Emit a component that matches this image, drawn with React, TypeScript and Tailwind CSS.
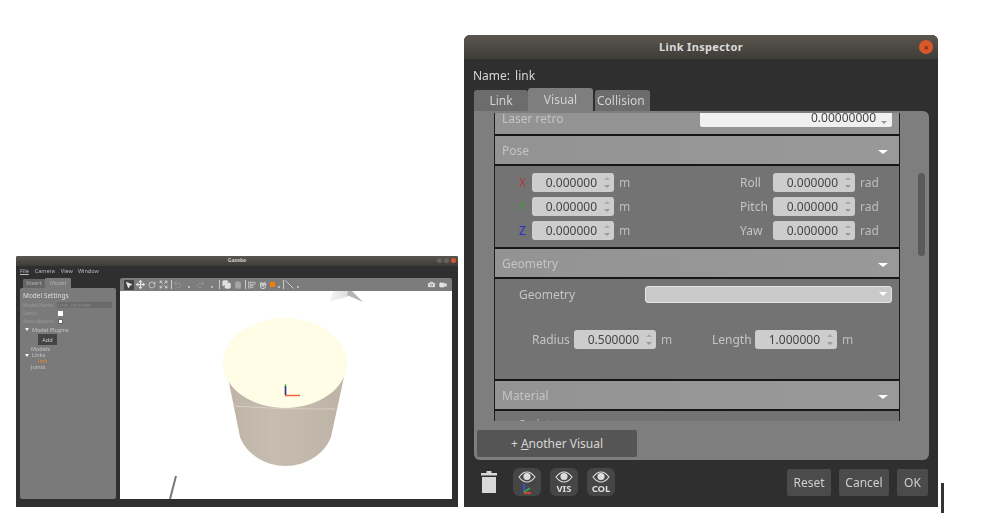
import React from "react";
import { MousePointer2, Move, RotateCw, Expand, Undo2, Redo2, Copy, Clipboard, AlignStartVertical, Magnet, Slash, Camera, Video } from "lucide-react";

const font = { fontFamily: '"Noto Sans", "Open Sans", sans-serif' };

function Dot({ className }: { className: string }) {
  return <div className={"w-[2px] h-[2px] bg-[#bbb] self-end mb-[3px] " + className} />;
}
function Sep({ className }: { className: string }) {
  return <div className={"w-px h-[9px] bg-[#ccc] " + className} />;
}

function GazeboWindow() {
  return (
    <div className="absolute left-[16px] top-[256px] w-[442px] h-[251px] bg-[#2f2f2f] flex flex-col blur-[0.6px] overflow-hidden rounded-t-[2px]">
      <div className="h-[10px] shrink-0 bg-gradient-to-b from-[#5a554e] to-[#3e3c38] flex items-center justify-center relative">
        <span className="text-[5px] font-bold text-[#ccc]">Gazebo</span>
        <div className="absolute right-[2px] top-[2px] flex gap-[2px]">
          <div className="w-[5px] h-[5px] rounded-full bg-[#66635e]" />
          <div className="w-[5px] h-[5px] rounded-full bg-[#66635e]" />
          <div className="w-[5px] h-[5px] rounded-full bg-[#d8582b]" />
        </div>
      </div>
      <div className="h-[11px] shrink-0 flex items-center pl-[4px] text-[5.5px] text-[#bbb] gap-[5px]">
        <span className="underline">File</span>
        <span className="ml-[1px]">Camera</span>
        <span className="ml-[1px]">View</span>
        <span>Window</span>
      </div>
      <div className="flex pl-[4px] pr-[6px] pt-px flex-1 min-h-0 pb-[8px]">
        <div className="w-[96px] flex flex-col shrink-0">
          <div className="flex h-[10px] text-[5.5px] text-[#b0b0b0] items-stretch pl-[3px]">
            <div className="w-[22px] bg-[#666] mt-px flex items-center justify-center rounded-t-[1px]">Insert</div>
            <div className="w-[26px] bg-[#7a7a7a] flex items-center justify-center rounded-t-[1px]">Model</div>
          </div>
          <div className="flex-1 bg-[#7a7a7a] rounded-[2px] pl-[3px] pt-[3px] text-[5.5px] leading-[8px] text-[#c4c4c4] whitespace-nowrap">
            <div className="text-[6.5px] leading-[9px] text-[#ddd]">Model Settings</div>
            <div className="flex items-center h-[8px] mt-[1px]">
              <span className="w-[34px] shrink-0 text-[5px] text-[#999]">Model Name:</span>
              <div className="w-[55px] h-[6px] bg-[#6a6a6a] text-[#888] leading-[6px] pl-px">unit_cylinder</div>
            </div>
            <div className="flex items-center h-[8px]">
              <span className="w-[35px] shrink-0 text-[5px] text-[#999]">Static:</span>
              <div className="w-[5px] h-[5px] bg-white" />
            </div>
            <div className="flex items-center h-[8px]">
              <span className="w-[35px] shrink-0 text-[5px] text-[#999]">Auto-disable:</span>
              <div className="w-[5px] h-[5px] bg-white border border-[#666]" />
            </div>
            <div className="flex items-center gap-[3px] pl-[2px] h-[9px]">
              <span className="w-0 h-0 border-x-[2px] border-x-transparent border-t-[3px] border-t-white" />
              <span>Model Plugins</span>
            </div>
            <div className="ml-[15px] w-[19px] h-[11px] bg-[#444] flex items-center justify-center text-[#ccc]">Add</div>
            <div className="ml-[8px] mt-[1px] h-[6px] leading-[6px]">Models</div>
            <div className="flex items-center gap-[3px] pl-[2px] h-[6px]">
              <span className="w-0 h-0 border-x-[2px] border-x-transparent border-t-[3px] border-t-white" />
              <span className="leading-[6px]">Links</span>
            </div>
            <div className="ml-[15px] h-[6px] leading-[6px] text-[#e08a2e]">link</div>
            <div className="ml-[8px] h-[6px] leading-[6px]">Joints</div>
          </div>
        </div>
        <div className="ml-[4px] flex-1 flex flex-col">
          <div className="h-[13px] shrink-0 bg-[#7c7c7c] rounded-t-[2px] flex items-center text-[#e2e2e2]">
            <div className="ml-[4px] w-[10px] h-[10px] bg-[#444] rounded-[1px] flex items-center justify-center"><MousePointer2 size={8} fill="#eee" /></div>
            <Move size={9} className="ml-[2px]" strokeWidth={3} />
            <RotateCw size={8} className="ml-[3px]" strokeWidth={2} />
            <Expand size={9} className="ml-[3px]" strokeWidth={2} />
            <Sep className="ml-[3px]" />
            <Undo2 size={9} className="ml-[1px] text-[#9a9a9a]" />
            <Dot className="ml-[6px]" />
            <Redo2 size={9} className="ml-[6px] text-[#9a9a9a]" />
            <Dot className="ml-[6px]" />
            <Sep className="ml-[6px]" />
            <Copy size={9} className="ml-[2px]" fill="#e2e2e2" />
            <Clipboard size={8} className="ml-[3px] text-[#a5a5a5]" fill="#a5a5a5" />
            <Sep className="ml-[3px]" />
            <AlignStartVertical size={8} className="ml-[2px]" />
            <Magnet size={8} className="ml-[3px] rotate-[135deg]" strokeWidth={2.5} />
            <div className="ml-[3px] w-[5px] h-[5px] bg-[#f57c00]" />
            <Dot className="ml-[3px]" />
            <Sep className="ml-[3px]" />
            <Slash size={9} className="ml-px rotate-[90deg]" />
            <Dot className="ml-[3px]" />
            <Camera size={9} fill="#e2e2e2" className="ml-auto text-[#7c7c7c]" />
            <Video size={8} fill="#e2e2e2" className="ml-[3px] mr-[5px] text-[#e2e2e2]" />
          </div>
          <div className="flex-1 bg-white min-h-0">
            <svg viewBox="0 0 332 208" className="w-full h-full block">
              <defs>
                <linearGradient id="cyl" x1="0" x2="1" y1="0" y2="0">
                  <stop offset="0" stopColor="#bdb3a6" />
                  <stop offset="0.4" stopColor="#c6bcb0" />
                  <stop offset="1" stopColor="#bcb2a6" />
                </linearGradient>
                <linearGradient id="shd" x1="0" x2="1" y1="0" y2="0">
                  <stop offset="0" stopColor="#f6f6f6" />
                  <stop offset="1" stopColor="#d8d8d8" />
                </linearGradient>
              </defs>
              <path d="M209 11 L213 0 L232 0 L229 5 Z" fill="url(#shd)" />
              <path d="M228 0 L232 0 L243 11 L227 4 Z" fill="#b4b4b4" />
              <path d="M105 72 L120 146 C127 164 146 175 165.500 175 C185 175 204 164 211 146 L227 72 Z" fill="url(#cyl)" />
              <ellipse cx="165" cy="72" rx="62" ry="45" fill="#fffde5" />
              <path d="M113 115 Q165 119 215 118" stroke="#d8d0c6" strokeWidth="1" fill="none" />
              <path d="M56 185 L50 208" stroke="#777" strokeWidth="2" />
              <path d="M165.500 95 L165.500 104" stroke="#2a2f8f" strokeWidth="1.6" />
              <path d="M165.500 93 L165.500 95" stroke="#55cc55" strokeWidth="1.4" />
              <path d="M165 104.500 L180 104.500" stroke="#f2603c" strokeWidth="1.6" />
            </svg>
          </div>
        </div>
      </div>
    </div>
  );
}

function Spin({ value = "0.000000" }: { value?: string }) {
  return (
    <div className="w-[82px] h-[19px] bg-[#cdcdcd] rounded-[3px] flex items-center text-[12px] text-[#444444] shrink-0">
      <span className="w-[65px] text-right pt-px">{value}</span>
      <div className="ml-auto mr-[3px] w-[9px] flex flex-col gap-[5px] items-center">
        <span className="w-0 h-0 border-x-[3px] border-x-transparent border-b-[3px] border-b-[#aaa]" />
        <span className="w-0 h-0 border-x-[3px] border-x-transparent border-t-[3px] border-t-[#999]" />
      </div>
    </div>
  );
}

function Header({ title }: { title: string }) {
  return (
    <div className="h-[28px] shrink-0 bg-gradient-to-r from-[#939393] to-[#999999] flex items-center justify-between pl-[7px] pr-[11px] text-[12px] text-[#c4c4c4]">
      <span className="pt-px">{title}</span>
      <span className="w-0 h-0 border-x-[5px] border-x-transparent border-t-[4px] border-t-white mt-[3px]" />
    </div>
  );
}

function Line() {
  return <div className="h-[2px] shrink-0 bg-[#161616]" />;
}

function PoseRow({ axis, color, right }: { axis: string; color: string; right: string }) {
  return (
    <div className="flex items-center h-[24px]">
      <span className={"w-[13px] pt-px text-[12px] " + color}>{axis}</span>
      <Spin />
      <span className="ml-[5px] w-[121px] pt-px text-[12px] text-[#bdbdbd]">m</span>
      <span className="w-[33px] pt-px text-[12px] text-[#c4c4c4]">{right}</span>
      <Spin />
      <span className="ml-[5px] pt-px text-[12px] text-[#bdbdbd]">rad</span>
    </div>
  );
}

function Eye({ size = 18 }: { size?: number }) {
  return (
    <svg width={size} height={12} viewBox="0 0 18 12" className="shrink-0">
      <path d="M1 6 C4 2 6.500 1 9 1 C11.500 1 14 2 17 6 C14 10 11.500 11 9 11 C6.500 11 4 10 1 6 Z" fill="none" stroke="#ddd" strokeWidth="1.2" />
      <circle cx="9" cy="5.500" r="3.600" fill="#ddd" />
    </svg>
  );
}

function IconBtn({ children }: { children: React.ReactNode }) {
  return (
    <div className="w-[28px] h-[28px] bg-[#464646] rounded-[6px] flex flex-col items-center justify-center pt-px">
      {children}
    </div>
  );
}

function FootBtn({ w, children }: { w: string; children: string }) {
  return (
    <div className={"h-[27px] bg-[#4b4b4b] rounded-[2px] flex items-center justify-center pt-px text-[12px] text-[#cfcfcf] " + w}>{children}</div>
  );
}

function Inspector() {
  return (
    <div className="absolute left-[464px] top-[35px] w-[474px] h-[472px] bg-[#2f2f2f] rounded-t-[6px] flex flex-col overflow-hidden blur-[0.25px]" style={font}>
      <div className="h-[24px] shrink-0 bg-gradient-to-b from-[#5a554e] to-[#3f3d39] flex items-center justify-center relative">
        <span className="text-[11px] font-bold text-[#dcdcdc] tracking-[0.35px]">Link Inspector</span>
        <div className="absolute right-[5px] top-[5px] w-[14px] h-[14px] rounded-full bg-[#d8582b] flex items-center justify-center text-[9px] leading-none text-[#7a2c12] font-bold">×</div>
      </div>
      <div className="h-[29px] shrink-0 pl-[9px] pt-[5px] text-[12px] text-[#d6d6d6] flex items-center gap-[5px]">
        <span>Name:</span><span>link</span>
      </div>
      <div className="h-[23px] shrink-0 flex items-end pl-[10px] text-[12px]">
        <div className="w-[54px] h-[21px] bg-[#6c6c6c] rounded-t-[3px] flex items-center justify-center text-[#d2d2d2]">Link</div>
        <div className="w-[65px] h-[23px] bg-[#7e7e7e] rounded-t-[3px] flex items-center justify-center text-[#d2d2d2]">Visual</div>
        <div className="ml-[2px] w-[55px] h-[21px] bg-[#6c6c6c] rounded-t-[3px] flex items-center pl-[2px] text-[#d2d2d2]">Collision</div>
      </div>
      <div className="ml-[10px] w-[455px] h-[349px] shrink-0 bg-[#7e7e7e] rounded-b-[6px] rounded-tr-[6px] flex flex-col">
        <div className="flex h-[308px] mt-[2px] shrink-0">
          <div className="ml-[20px] w-[406px] h-full border-x border-[#1c1c1c] flex flex-col overflow-hidden whitespace-nowrap">
            <div className="h-[21px] shrink-0 bg-[#939393] flex pl-[7px] text-[12px] text-[#c4c4c4]">
              <span className="-mt-[3px] w-[198px] shrink-0">Laser retro</span>
              <div className="w-[192px] h-[14px] shrink-0 bg-[#f0f0f0] rounded-b-[2px] flex items-center text-[12px] text-[#444444]">
                <span className="w-[176px] text-right -mt-[4px] shrink-0">0.00000000</span>
                <span className="ml-[5px] mt-[4px] w-0 h-0 border-x-[3px] border-x-transparent border-t-[3px] border-t-[#999]" />
              </div>
            </div>
            <Line />
            <Header title="Pose" />
            <Line />
            <div className="h-[81px] shrink-0 bg-[#737373] pl-[24px] pt-[4px]">
              <PoseRow axis="X" color="text-[#b03a3a]" right="Roll" />
              <PoseRow axis="Y" color="text-[#3f9a3f]" right="Pitch" />
              <PoseRow axis="Z" color="text-[#2a2ad0]" right="Yaw" />
            </div>
            <Line />
            <Header title="Geometry" />
            <Line />
            <div className="h-[100px] shrink-0 bg-[#737373] flex flex-col">
              <div className="flex items-center pl-[24px] pt-[6px] h-[24px] text-[12px] text-[#c4c4c4]">
                <span className="w-[126px] pt-px">Geometry</span>
                <div className="w-[247px] h-[17px] bg-[#c9c9c9] border border-[#e5e5e5] rounded-[3px] flex items-center justify-end pr-[4px]">
                  <span className="w-0 h-0 border-x-[4px] border-x-transparent border-t-[4px] border-t-white" />
                </div>
              </div>
              <div className="flex items-center pl-[37px] mt-[27px] text-[12px] text-[#c4c4c4]">
                <span className="w-[42px] pt-px">Radius</span>
                <Spin value="0.500000" />
                <span className="ml-[5px] w-[51px] pt-px text-[#bdbdbd]">m</span>
                <span className="w-[43px] pt-px">Length</span>
                <Spin value="1.000000" />
                <span className="ml-[5px] pt-px text-[#bdbdbd]">m</span>
              </div>
            </div>
            <Line />
            <Header title="Material" />
            <Line />
            <div className="flex-1 bg-[#737373] pl-[24px] text-[12px] text-[#c4c4c4] overflow-hidden">
              <span className="block mt-[5px]">Script</span>
            </div>
          </div>
          <div className="ml-[18px] mt-[60px] w-[7px] h-[83px] bg-[#5a5a5a] rounded-[4px]" />
        </div>
        <div className="ml-[3px] mt-[9px] w-[160px] h-[27px] bg-[#555555] rounded-[2px] flex items-center justify-center text-[12px] text-[#d6d6d6]">
          <span>+ <span className="underline">A</span>nother Visual</span>
        </div>
      </div>
      <div className="flex items-center flex-1 pl-[17px] pr-[10px] pb-[3px]">
        <svg width="16" height="22" viewBox="0 0 16 22" fill="#d8d8d8" className="shrink-0">
          <path d="M5.500 0 H10.500 V2 H16 V4.500 H0 V2 H5.500 Z" />
          <path d="M1 6 H15 V22 H1 Z" />
        </svg>
        <div className="ml-[16px] flex gap-[9px]">
          <IconBtn>
            <Eye />
            <svg width="12" height="12" viewBox="0 0 12 12">
              <path d="M3 1 V10" stroke="#3a4fd0" strokeWidth="2" />
              <path d="M3 10 L10 10" stroke="#d8402f" strokeWidth="2" />
              <path d="M3 9 L9 5" stroke="#3aa04a" strokeWidth="2" />
            </svg>
          </IconBtn>
          <IconBtn>
            <Eye />
            <span className="text-[9.5px] leading-[11px] font-bold text-[#ddd]">VIS</span>
          </IconBtn>
          <IconBtn>
            <Eye />
            <span className="text-[9.5px] leading-[11px] font-bold text-[#ddd]">COL</span>
          </IconBtn>
        </div>
        <div className="ml-auto flex gap-[8px]">
          <FootBtn w="w-[44px]">Reset</FootBtn>
          <FootBtn w="w-[50px]">Cancel</FootBtn>
          <FootBtn w="w-[31px]">OK</FootBtn>
        </div>
      </div>
    </div>
  );
}

export default function App() {
  return (
    <div className="relative w-[983px] h-[531px] bg-white overflow-hidden" style={font}>
      <GazeboWindow />
      <Inspector />
      <div className="absolute left-[941px] top-[483px] w-[3px] h-[30px] bg-[#333]" />
    </div>
  );
}
